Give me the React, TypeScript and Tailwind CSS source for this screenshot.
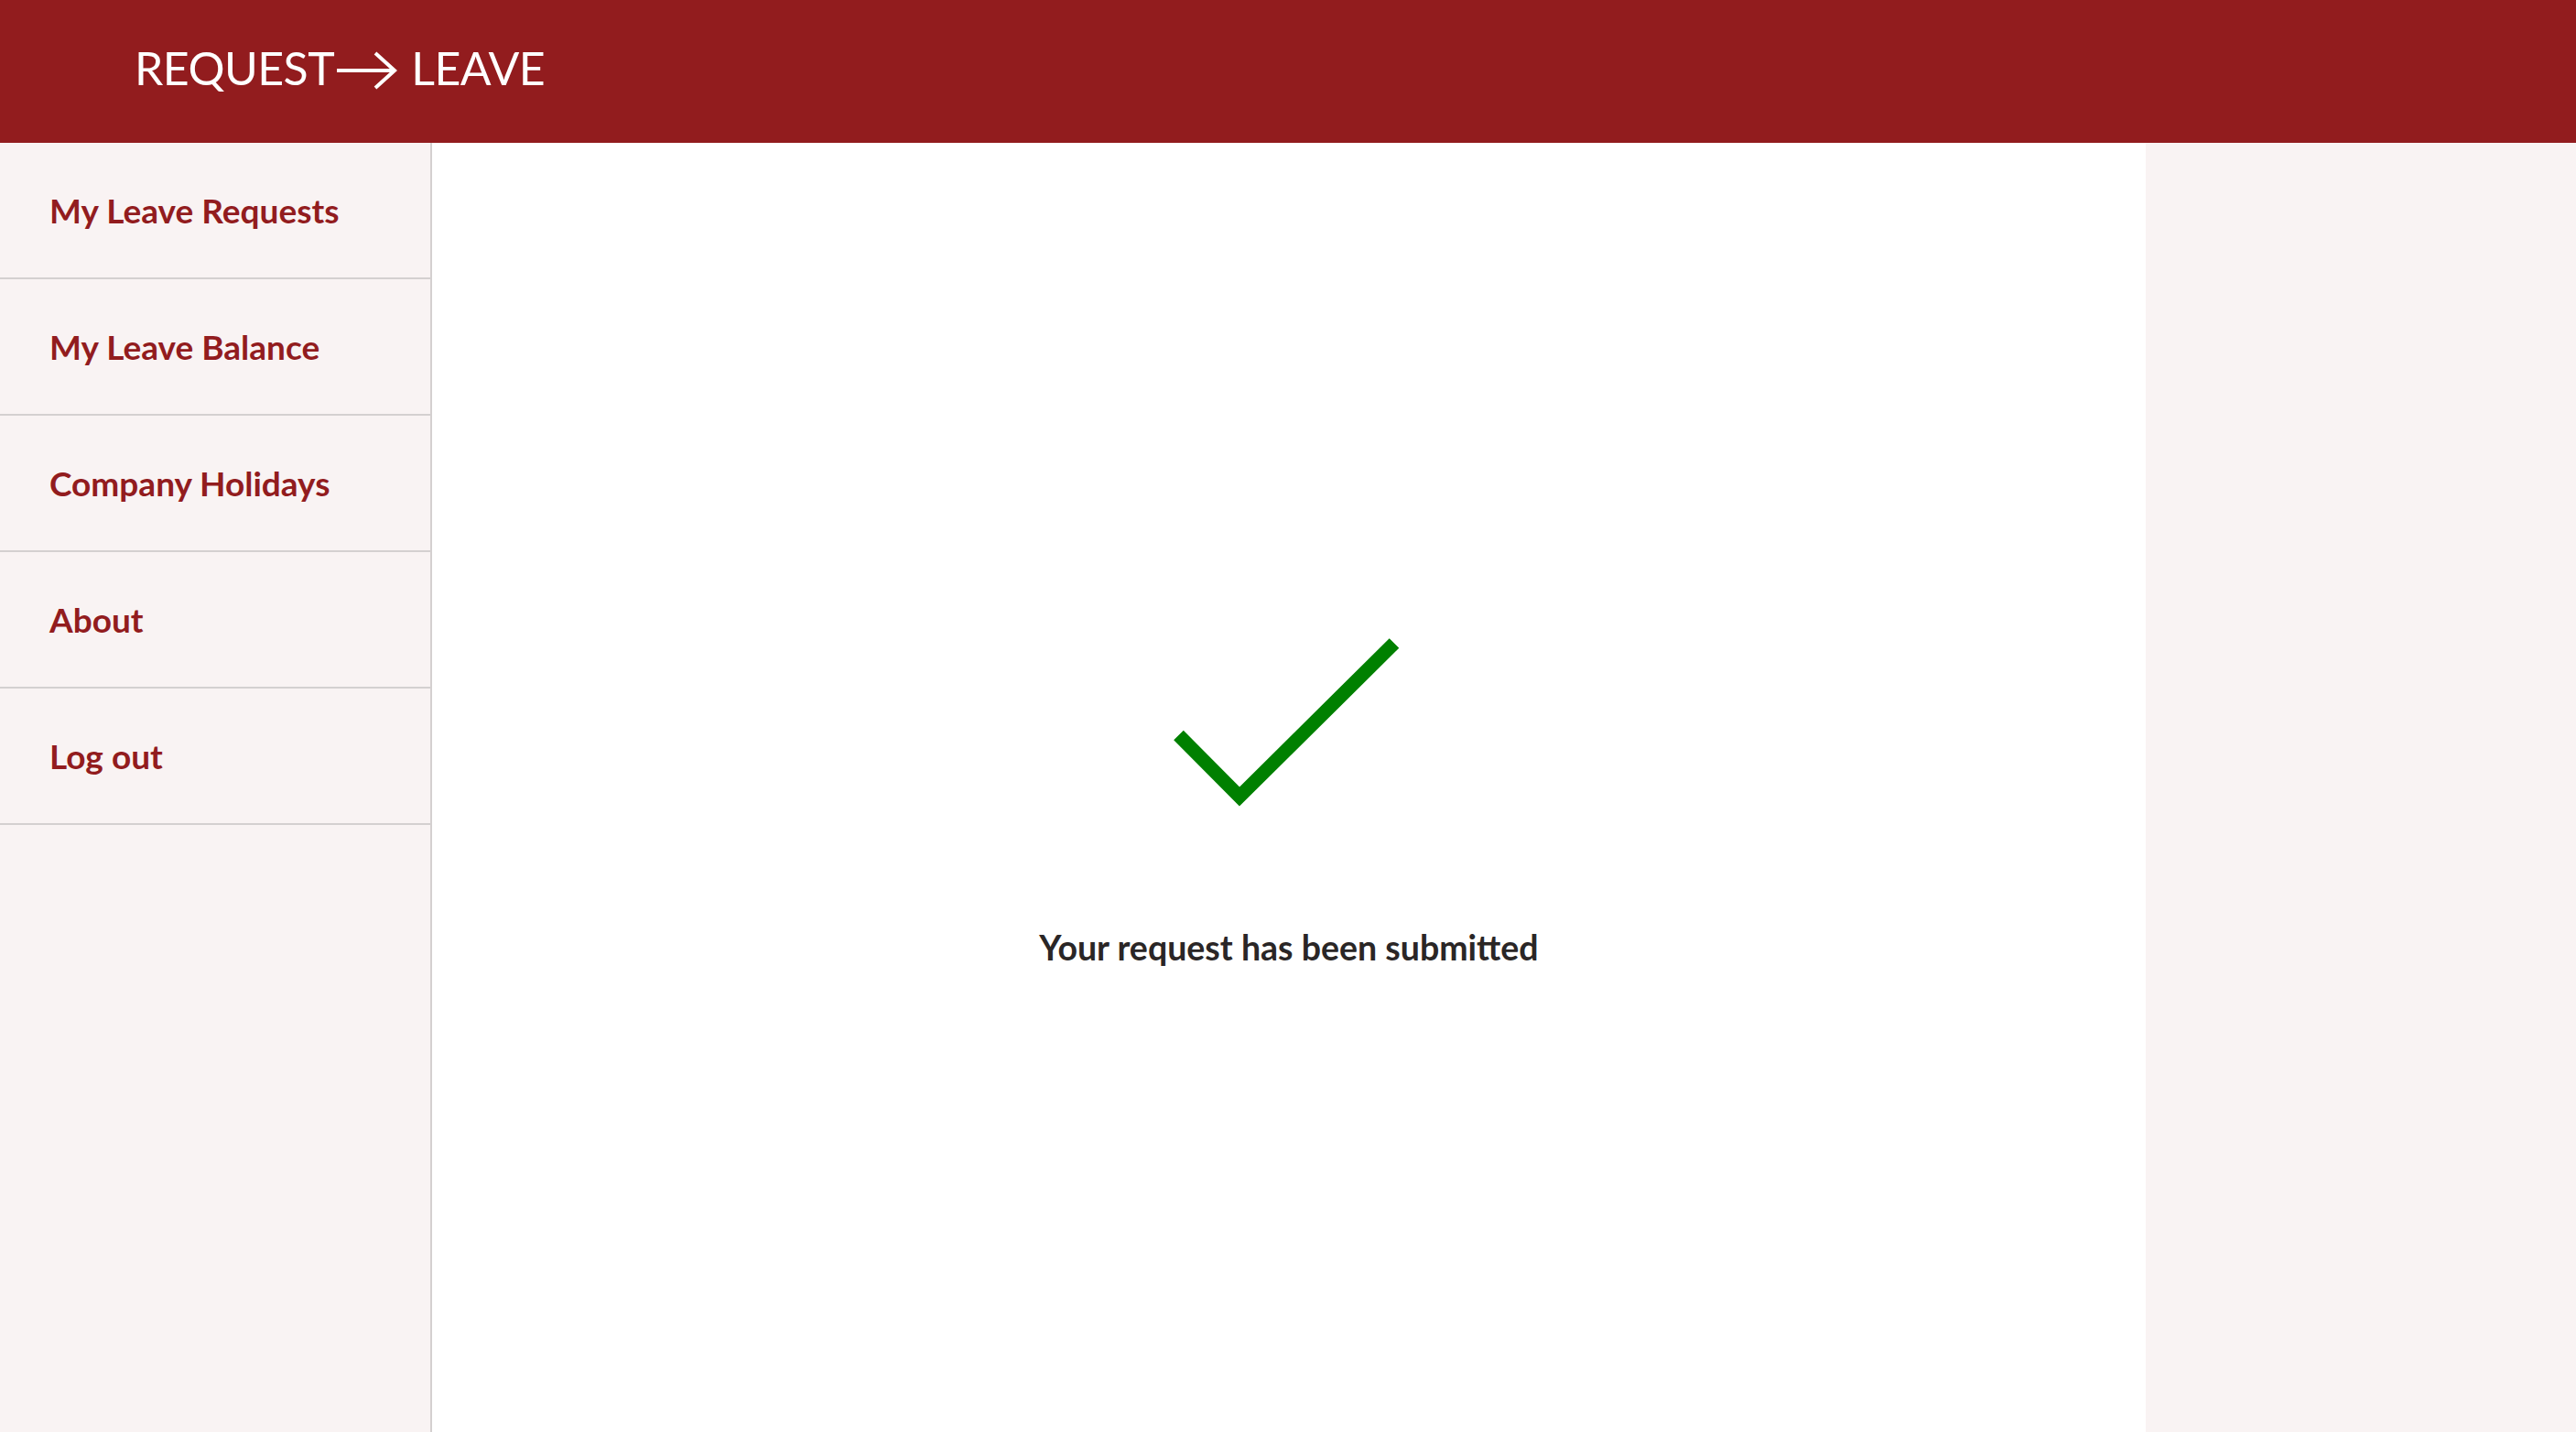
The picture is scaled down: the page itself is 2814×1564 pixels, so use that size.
import React from 'react';

const NAV = [
	'My Leave Requests',
	'My Leave Balance',
	'Company Holidays',
	'About',
	'Log out',
];

function Check() {
	return (
		<svg width="260" height="200" viewBox="0 0 260 200" className="block">
			<polyline
				points="9.5,106 76,173 245,5.5"
				fill="none"
				stroke="#008000"
				strokeWidth="15"
				strokeLinecap="butt"
				strokeLinejoin="miter"
			/>
		</svg>
	);
}

function Arrow() {
	return (
		<svg width="66" height="42" viewBox="0 0 66 42" className="block mt-[6px] ml-[3px] mr-[15px]">
			<line x1="0" y1="21" x2="63" y2="21" stroke="white" strokeWidth="4" />
			<polyline
				points="42,2 63,21 42,40"
				fill="none"
				stroke="white"
				strokeWidth="4"
				strokeLinejoin="miter"
			/>
		</svg>
	);
}

export default function App() {
	return (
		<div
			className="h-screen flex flex-col overflow-hidden"
			style={{ fontFamily: 'Lato, "Noto Sans", sans-serif' }}
		>
			{/* Top bar */}
			<header className="h-[156px] shrink-0 bg-[#921c1e] flex items-center pl-[147px] pb-[9px]">
				<div className="flex items-center text-white text-[50px] leading-none tracking-[-0.5px]">
					<span>REQUEST</span>
					<Arrow />
					<span>LEAVE</span>
				</div>
			</header>

			<div className="flex flex-1 min-h-0">
				{/* Sidebar */}
				<nav className="w-[472px] shrink-0 bg-[#f9f3f3] border-r-2 border-[#d4d0d0]">
					{NAV.map((item) => (
						<div
							key={item}
							className="h-[149px] flex items-center pl-[54px] border-b-2 border-[#d4d0d0]"
						>
							<span className="text-[#921c1e] text-[37px] font-bold">
								{item}
							</span>
						</div>
					))}
				</nav>

				{/* Main */}
				<main className="w-[1872px] shrink-0 bg-white flex flex-col items-center pt-[541px]">
					<Check />
					<p className="mt-[119px] text-[37.5px] font-bold leading-none text-[#2a2626]">
						Your request has been submitted
					</p>
				</main>

				<aside className="flex-1 bg-[#f9f3f3]" />
			</div>
		</div>
	);
}
